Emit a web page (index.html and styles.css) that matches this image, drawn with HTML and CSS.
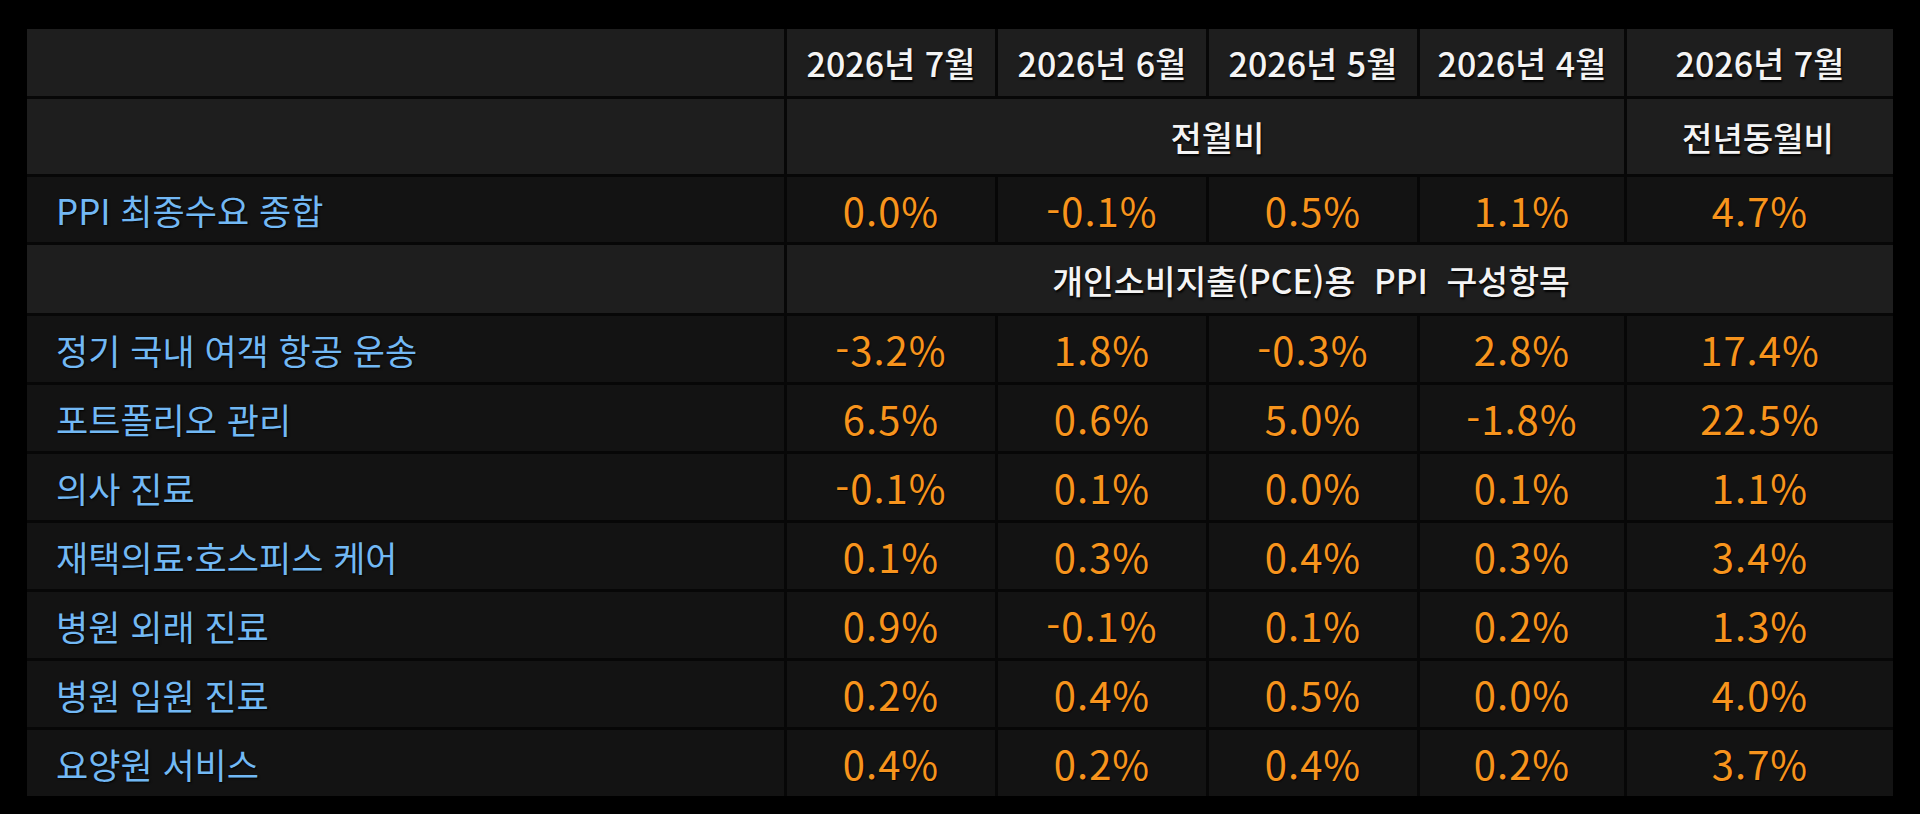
FILE: index.html
```html
<!DOCTYPE html>
<html lang="ko">
<head>
<meta charset="utf-8">
<title>PPI 표</title>
<link rel="stylesheet" href="styles.css">
</head>
<body>
<div class="table">
  <div class="cell hd"></div>
  <div class="cell hd th">2026년 7월</div>
  <div class="cell hd th">2026년 6월</div>
  <div class="cell hd th">2026년 5월</div>
  <div class="cell hd th">2026년 4월</div>
  <div class="cell hd th">2026년 7월</div>

  <div class="cell hd"></div>
  <div class="cell hd th span4 mom">전월비</div>
  <div class="cell hd th yoy">전년동월비</div>

  <div class="cell dc lbl">PPI 최종수요 종합</div>
  <div class="cell dc val">0.0%</div>
  <div class="cell dc val">-0.1%</div>
  <div class="cell dc val">0.5%</div>
  <div class="cell dc val">1.1%</div>
  <div class="cell dc val">4.7%</div>

  <div class="cell hd"></div>
  <div class="cell hd th sub span5">개인소비지출(PCE)용&nbsp; PPI&nbsp; 구성항목</div>

  <div class="cell dc lbl">정기 국내 여객 항공 운송</div>
  <div class="cell dc val">-3.2%</div>
  <div class="cell dc val">1.8%</div>
  <div class="cell dc val">-0.3%</div>
  <div class="cell dc val">2.8%</div>
  <div class="cell dc val">17.4%</div>

  <div class="cell dc lbl">포트폴리오 관리</div>
  <div class="cell dc val">6.5%</div>
  <div class="cell dc val">0.6%</div>
  <div class="cell dc val">5.0%</div>
  <div class="cell dc val">-1.8%</div>
  <div class="cell dc val">22.5%</div>

  <div class="cell dc lbl">의사 진료</div>
  <div class="cell dc val">-0.1%</div>
  <div class="cell dc val">0.1%</div>
  <div class="cell dc val">0.0%</div>
  <div class="cell dc val">0.1%</div>
  <div class="cell dc val">1.1%</div>

  <div class="cell dc lbl">재택의료·호스피스 케어</div>
  <div class="cell dc val">0.1%</div>
  <div class="cell dc val">0.3%</div>
  <div class="cell dc val">0.4%</div>
  <div class="cell dc val">0.3%</div>
  <div class="cell dc val">3.4%</div>

  <div class="cell dc lbl">병원 외래 진료</div>
  <div class="cell dc val">0.9%</div>
  <div class="cell dc val">-0.1%</div>
  <div class="cell dc val">0.1%</div>
  <div class="cell dc val">0.2%</div>
  <div class="cell dc val">1.3%</div>

  <div class="cell dc lbl">병원 입원 진료</div>
  <div class="cell dc val">0.2%</div>
  <div class="cell dc val">0.4%</div>
  <div class="cell dc val">0.5%</div>
  <div class="cell dc val">0.0%</div>
  <div class="cell dc val">4.0%</div>

  <div class="cell dc lbl">요양원 서비스</div>
  <div class="cell dc val">0.4%</div>
  <div class="cell dc val">0.2%</div>
  <div class="cell dc val">0.4%</div>
  <div class="cell dc val">0.2%</div>
  <div class="cell dc val">3.7%</div>
</div>
</body>
</html>
```

FILE: styles.css
```css
html, body {
  margin: 0;
  padding: 0;
  background: #000;
}
body {
  padding: 29px 27px 0 27px;
  font-family: "Noto Sans CJK KR", "Noto Sans", sans-serif;
}
.table {
  display: grid;
  width: 1866px;
  grid-template-columns: 757px 208px 208px 208px 204px 266px;
  grid-template-rows: 67px 75px 65px 68px repeat(7, 66px);
  gap: 3px;
  background: #070707;
}
.cell {
  display: flex;
  align-items: center;
  justify-content: center;
  white-space: nowrap;
}
.hd {
  background: #1e1e1e;
}
.dc {
  background: #131313;
}
.th {
  color: #f4f4f4;
  font-size: 34px;
  font-weight: 500;
  text-shadow: 1px 2px 2px rgba(0, 0, 0, 0.9);
}
.mom {
  padding-left: 24px;
}
.yoy {
  font-size: 33px;
  padding-right: 4px;
}
.sub {
  font-size: 33.5px;
  padding-right: 58px;
}
.span4 {
  grid-column: span 4;
}
.span5 {
  grid-column: span 5;
}
.lbl {
  justify-content: flex-start;
  padding-left: 29px;
  color: #72b8f4;
  font-size: 35px;
  text-shadow: 1px 1px 2px rgba(0, 0, 0, 0.9);
}
.val {
  color: #f7941d;
  font-size: 40px;
  letter-spacing: 1px;
  text-shadow: 1px 1px 1px rgba(0, 0, 0, 0.7);
}
```
